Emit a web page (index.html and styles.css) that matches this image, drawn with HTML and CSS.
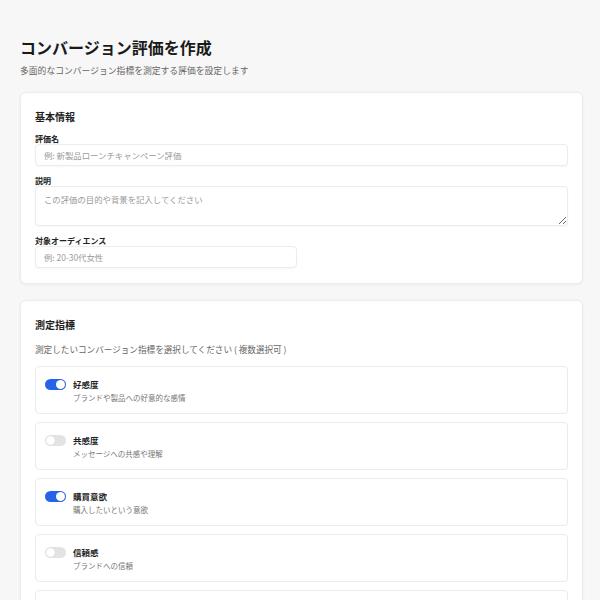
FILE: index.html
```html
<!DOCTYPE html>
<html lang="ja">
<head>
    <meta charset="UTF-8">
    <meta name="viewport" content="width=device-width, initial-scale=1.0">
    <title>コンバージョン評価を作成</title>
    <link rel="stylesheet" href="styles.css">
</head>
<body>
    <div class="page">
        <h1 class="page-title">コンバージョン評価を作成</h1>
        <p class="page-subtitle">多面的なコンバージョン指標を測定する評価を設定します</p>

        <!-- 基本情報 -->
        <section class="card">
            <h2 class="card-title">基本情報</h2>
            <div class="field">
                <label for="evalName">評価名</label>
                <input type="text" id="evalName" class="text-input" placeholder="例: 新製品ローンチキャンペーン評価">
            </div>
            <div class="field">
                <label for="evalDesc">説明</label>
                <textarea id="evalDesc" class="text-area" placeholder="この評価の目的や背景を記入してください"></textarea>
            </div>
            <div class="field field-last">
                <label for="audience">対象オーディエンス</label>
                <input type="text" id="audience" class="text-input half" placeholder="例: 20-30代女性">
            </div>
        </section>

        <!-- 測定指標 -->
        <section class="card card-metrics">
            <h2 class="card-title">測定指標</h2>
            <p class="card-note">測定したいコンバージョン指標を選択してください ( 複数選択可 )</p>

            <div class="metric-list">
                <div class="metric-item">
                    <span class="toggle on"></span>
                    <div class="metric-text">
                        <div class="metric-name">好感度</div>
                        <div class="metric-desc">ブランドや製品への好意的な感情</div>
                    </div>
                </div>
                <div class="metric-item">
                    <span class="toggle"></span>
                    <div class="metric-text">
                        <div class="metric-name">共感度</div>
                        <div class="metric-desc">メッセージへの共感や理解</div>
                    </div>
                </div>
                <div class="metric-item">
                    <span class="toggle on"></span>
                    <div class="metric-text">
                        <div class="metric-name">購買意欲</div>
                        <div class="metric-desc">購入したいという意欲</div>
                    </div>
                </div>
                <div class="metric-item">
                    <span class="toggle"></span>
                    <div class="metric-text">
                        <div class="metric-name">信頼感</div>
                        <div class="metric-desc">ブランドへの信頼</div>
                    </div>
                </div>
                <!-- 次の指標（画面外） -->
                <div class="metric-item">
                    <span class="toggle"></span>
                </div>
            </div>
        </section>
    </div>
</body>
</html>
```

FILE: styles.css
```css
* {
    box-sizing: border-box;
}

body {
    margin: 0;
    background-color: #f7f7f7;
    font-family: "Noto Sans CJK JP", "Noto Sans", sans-serif;
    color: #1f1f1f;
}

.page {
    width: 563px;
    margin-left: 20px;
    padding-top: 36px;
}

.page-title {
    margin: 0;
    font-size: 16px;
    line-height: 22px;
    font-weight: 700;
    color: #1a1a1a;
}

.page-subtitle {
    margin: 6px 0 15px;
    font-size: 8.8px;
    line-height: 13px;
    color: #666;
}

.card {
    background-color: #fff;
    border: 1px solid #ececec;
    border-radius: 6px;
    box-shadow: 0 1px 3px rgba(0, 0, 0, 0.06);
    padding: 17px 14px 15px;
}

.card-metrics {
    margin-top: 16px;
}

.card-title {
    margin: 0 0 10px;
    font-size: 10px;
    line-height: 14px;
    font-weight: 700;
    color: #1f1f1f;
}

.field {
    margin-bottom: 10px;
}

.field-last {
    margin-bottom: 0;
}

.field label {
    display: block;
    font-size: 8px;
    line-height: 10px;
    font-weight: 700;
    color: #222;
}

.text-input,
.text-area {
    display: block;
    width: 100%;
    border: 1px solid #ececec;
    border-radius: 4px;
    background-color: #fff;
    box-shadow: 0 1px 2px rgba(0, 0, 0, 0.04);
    font-family: inherit;
    font-size: 8.4px;
    color: #333;
    padding: 0 8px;
    outline: none;
}

.text-input {
    height: 22px;
}

.text-input.half {
    width: 262px;
}

.text-area {
    height: 40px;
    padding-top: 6px;
    resize: vertical;
}

.text-input::placeholder,
.text-area::placeholder {
    color: #9a9a9a;
}

.card-note {
    margin: 11px 0 11px;
    font-size: 8.6px;
    line-height: 12px;
    color: #666;
}

.metric-list {
    display: flex;
    flex-direction: column;
    gap: 8px;
}

.metric-item {
    display: flex;
    align-items: flex-start;
    gap: 7px;
    height: 48px;
    padding: 11px 9px 0;
    border: 1px solid #ebebeb;
    border-radius: 4px;
    background-color: #fff;
}

.toggle {
    position: relative;
    flex-shrink: 0;
    width: 21px;
    height: 11px;
    margin-top: 1px;
    border-radius: 6px;
    background-color: #e3e3e3;
}

.toggle::after {
    content: "";
    position: absolute;
    top: 1px;
    left: 1px;
    width: 9px;
    height: 9px;
    border-radius: 50%;
    background-color: #fff;
    box-shadow: 0 0 1px rgba(0, 0, 0, 0.2);
}

.toggle.on {
    background-color: #2563eb;
}

.toggle.on::after {
    left: 11px;
}

.metric-name {
    font-size: 8.5px;
    line-height: 12px;
    font-weight: 700;
    color: #222;
}

.metric-desc {
    margin-top: 2px;
    font-size: 7.5px;
    line-height: 11px;
    color: #777;
}
```
